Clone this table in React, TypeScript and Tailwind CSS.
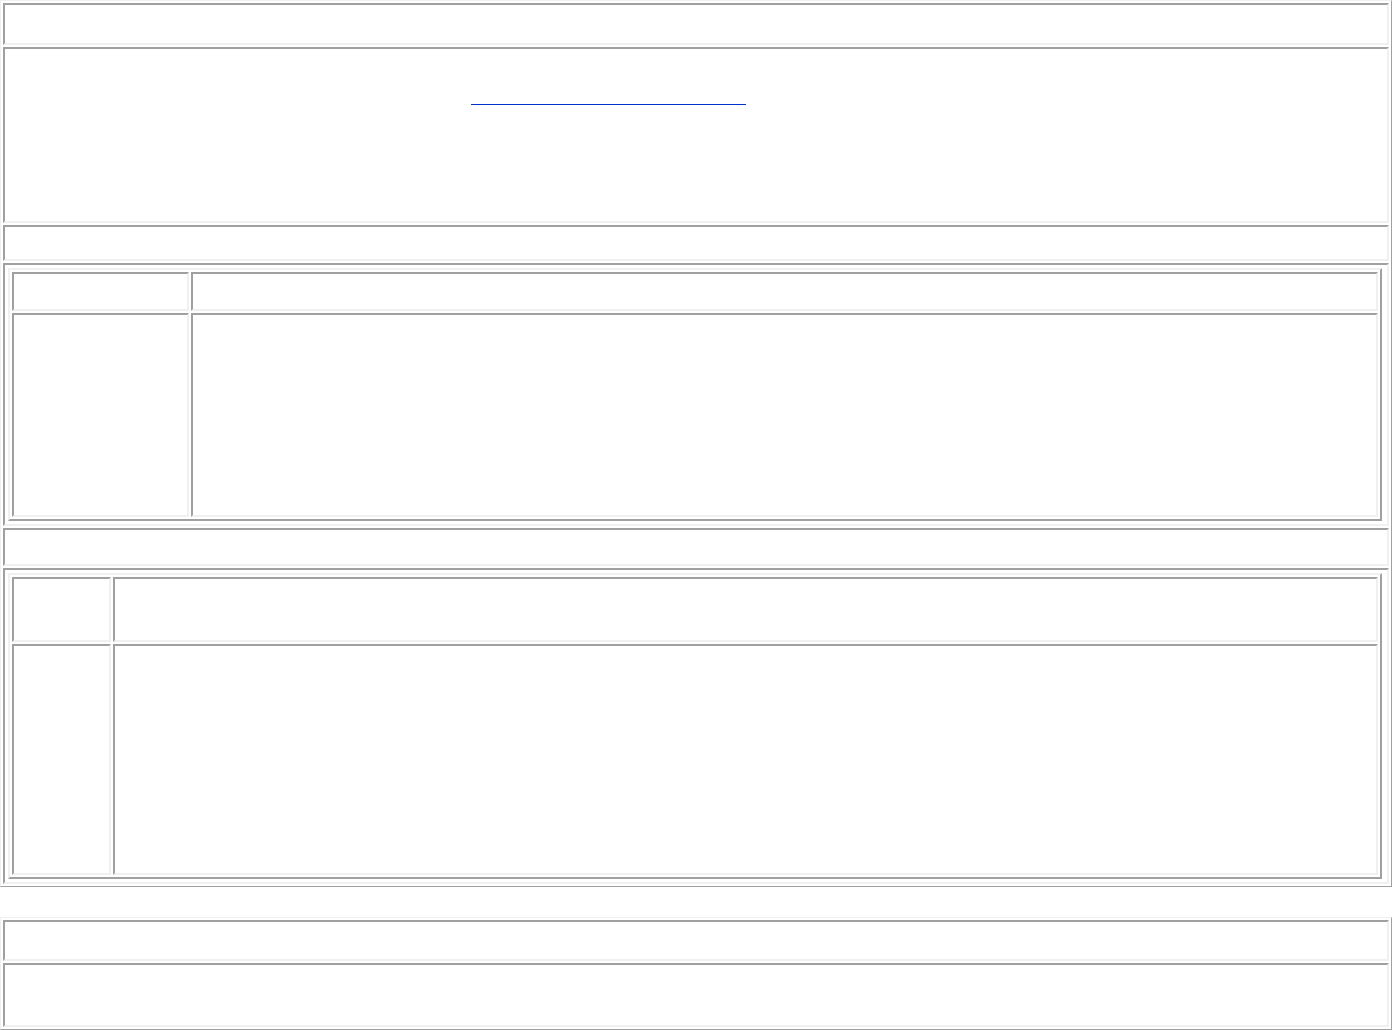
import React from 'react';

// old-school border="1" table look: raised frame, sunken cells
const raised = "border-t-[#f0f0f0] border-l-[#f0f0f0] border-r-[#a0a0a0] border-b-[#a0a0a0]";
const sunken = "border-2 border-t-[#a0a0a0] border-l-[#a0a0a0] border-r-[#f0f0f0] border-b-[#f0f0f0]";

function Cell({ className = "", children }: { className?: string; children?: React.ReactNode }) {
  return <div className={`${sunken} bg-white ${className}`}>{children}</div>;
}

interface InnerTableProps {
  firstCol: number;
  headHeight: number;
  bodyHeight: number;
}

function InnerTable({ firstCol, headHeight, bodyHeight }: InnerTableProps) {
  const rows = [headHeight, bodyHeight];
  return (
    <div className={`w-[1374px] border-2 ${raised} p-[2px] flex flex-col gap-[2px]`}>
      {rows.map((h, i) => (
        <div key={i} className="flex gap-[2px]" style={{ height: h }}>
          <Cell className="shrink-0">
            <div style={{ width: firstCol - 4 }} />
          </Cell>
          <Cell className="flex-1" />
        </div>
      ))}
    </div>
  );
}

export default function App() {
  return (
    <div className="bg-white min-h-screen font-['Liberation_Serif',serif] text-[16px] text-black">
      <div className={`w-[1392px] border ${raised} p-[2px] flex flex-col gap-[2px]`}>
        <Cell className="h-[42px]" />
        <Cell className="h-[176px]">
          <a
            href="#"
            className="block ml-[466px] mt-[55px] w-[275px] h-0 border-b border-[#0033cc]"
          />
        </Cell>
        <Cell className="h-[36px]" />
        <Cell className="h-[263px] pl-[3px] pt-[3px]">
          <InnerTable firstCol={177} headHeight={39} bodyHeight={204} />
        </Cell>
        <Cell className="h-[38px]" />
        <Cell className="h-[316px] pl-[3px] pt-[3px]">
          <InnerTable firstCol={99} headHeight={65} bodyHeight={231} />
        </Cell>
      </div>

      <div className={`mt-[30px] w-[1392px] border ${raised} p-[2px] flex flex-col gap-[2px]`}>
        <Cell className="h-[41px]" />
        <Cell className="h-[64px]" />
      </div>
    </div>
  );
}
